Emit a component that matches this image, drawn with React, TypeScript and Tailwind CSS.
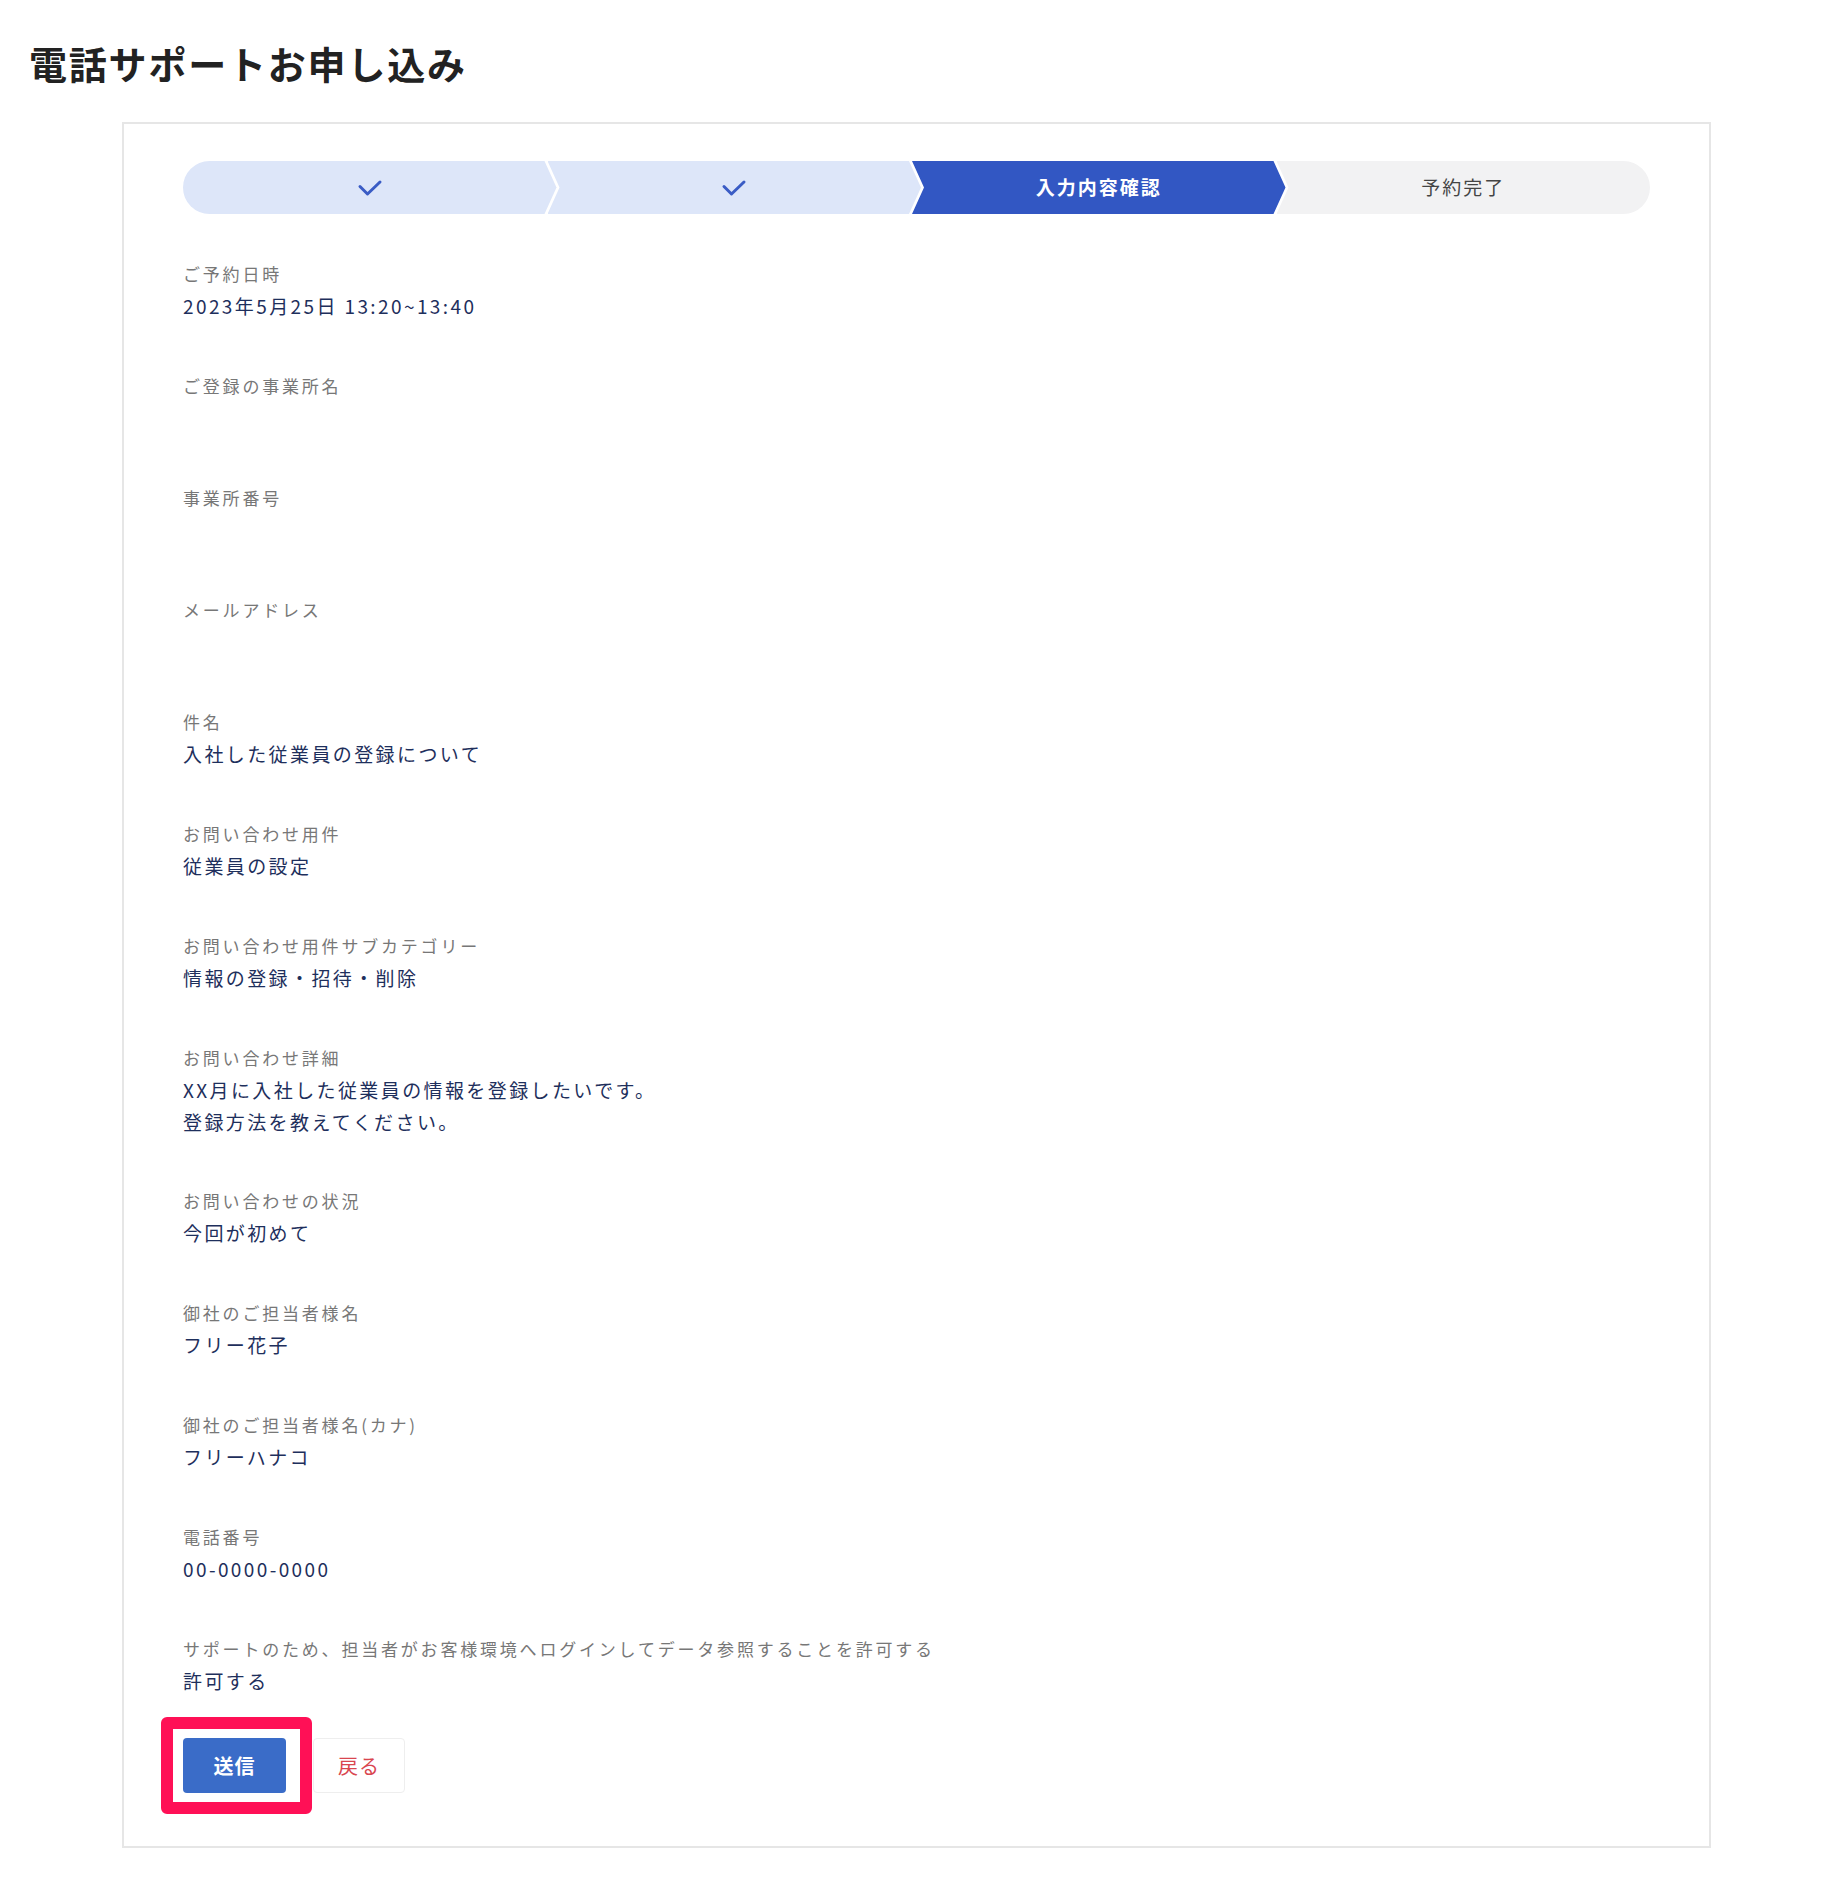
import React from "react";

type Row = { label: string; value?: string[] };

const rows: Row[] = [
  { label: "ご予約日時", value: ["2023年5月25日 13:20~13:40"] },
  { label: "ご登録の事業所名" },
  { label: "事業所番号" },
  { label: "メールアドレス" },
  { label: "件名", value: ["入社した従業員の登録について"] },
  { label: "お問い合わせ用件", value: ["従業員の設定"] },
  { label: "お問い合わせ用件サブカテゴリー", value: ["情報の登録・招待・削除"] },
  {
    label: "お問い合わせ詳細",
    value: ["XX月に入社した従業員の情報を登録したいです。", "登録方法を教えてください。"],
  },
  { label: "お問い合わせの状況", value: ["今回が初めて"] },
  { label: "御社のご担当者様名", value: ["フリー花子"] },
  { label: "御社のご担当者様名(カナ)", value: ["フリーハナコ"] },
  { label: "電話番号", value: ["00-0000-0000"] },
  {
    label: "サポートのため、担当者がお客様環境へログインしてデータ参照することを許可する",
    value: ["許可する"],
  },
];

function Check() {
  return (
    <svg width="26" height="18" viewBox="0 0 26 18" fill="none">
      <path
        d="M3 7.5 L10.5 15 L23 3"
        stroke="#3a5cc5"
        strokeWidth="3"
        strokeLinecap="round"
        strokeLinejoin="round"
      />
    </svg>
  );
}

function Stepper() {
  return (
    <div className="flex h-[53px] w-full">
      {/* step 1 */}
      <div className="flex flex-1 items-center justify-center rounded-l-full bg-[#dde6f9] [clip-path:polygon(0_0,calc(100%_-_12px)_0,100%_50%,calc(100%_-_12px)_100%,0_100%)]">
        <Check />
      </div>
      {/* step 2 */}
      <div className="-ml-[9px] flex flex-1 items-center justify-center bg-[#dde6f9] [clip-path:polygon(0_0,calc(100%_-_12px)_0,100%_50%,calc(100%_-_12px)_100%,0_100%,12px_50%)]">
        <Check />
      </div>
      {/* step 3 */}
      <div className="-ml-[9px] flex flex-1 items-center justify-center bg-[#3257c3] text-[19px] font-semibold tracking-[2px] text-white [clip-path:polygon(0_0,calc(100%_-_12px)_0,100%_50%,calc(100%_-_12px)_100%,0_100%,12px_50%)]">
        入力内容確認
      </div>
      {/* step 4 */}
      <div className="-ml-[9px] flex flex-1 items-center justify-center rounded-r-full bg-[#f2f2f3] text-[19px] tracking-[2px] text-[#444] [clip-path:polygon(0_0,100%_0,100%_100%,0_100%,12px_50%)]">
        予約完了
      </div>
    </div>
  );
}

export default function App() {
  return (
    <div className="min-h-[1886px] w-[1836px] bg-white font-['Noto_Sans_CJK_JP','Noto_Sans',sans-serif]">
      <h1 className="pl-[29px] pt-[39px] text-[38px] font-bold leading-[48px] tracking-[1.8px] text-[#222]">
        電話サポートお申し込み
      </h1>

      <div className="ml-[122px] mt-[35px] w-[1589px] border-2 border-[#e6e6e6] px-[59px] pb-[53px] pt-[37px]">
        <Stepper />

        <dl className="mt-[43px]">
          {rows.map((r) => (
            <div key={r.label} className="mb-[46px]">
              <dt className="text-[17px] leading-[33px] tracking-[2.8px] text-[#777]">
                {r.label}
              </dt>
              <dd className="min-h-[33px] text-[19px] leading-[32px] tracking-[2.4px] text-[#1e2f5c]">
                {r.value?.map((v) => (
                  <div key={v}>{v}</div>
                ))}
              </dd>
            </div>
          ))}
        </dl>

        {/* ================= ACTIONS ================= */}
        <div className="-mt-[6px] flex items-center gap-[27px]">
          <div className="relative">
            <button className="h-[55px] w-[103px] rounded-[4px] bg-[#3a6cc8] text-[20px] font-bold tracking-[1px] text-white">
              送信
            </button>
            <span className="pointer-events-none absolute -bottom-[21px] -left-[22px] -right-[26px] -top-[21px] rounded-[6px] border-[12px] border-[#ff1056]" />
          </div>
          <button className="h-[55px] w-[92px] rounded-[4px] border border-[#eeeeee] bg-white text-[20px] tracking-[1px] text-[#d9464f]">
            戻る
          </button>
        </div>
      </div>
    </div>
  );
}
